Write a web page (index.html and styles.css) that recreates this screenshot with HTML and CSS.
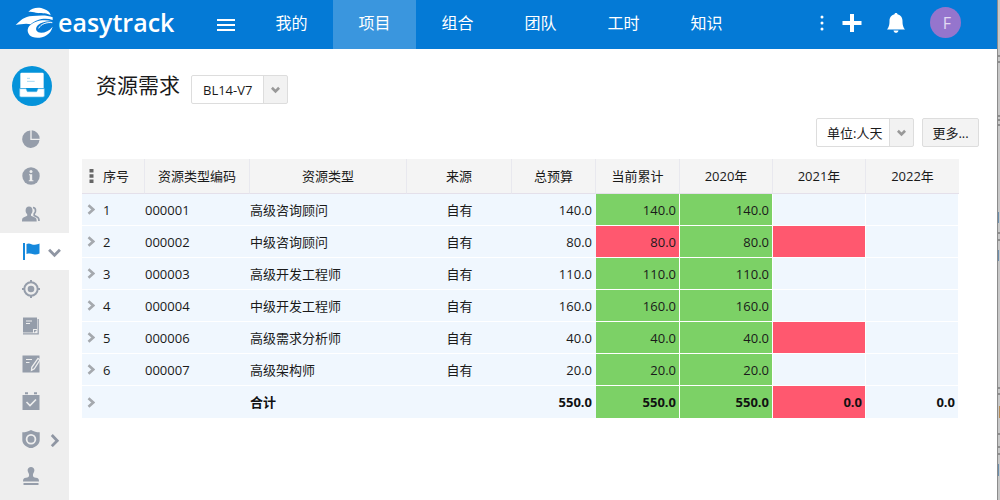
FILE: index.html
```
<!DOCTYPE html>
<html lang="zh-CN">
<head>
<meta charset="utf-8">
<title>资源需求</title>
<link rel="stylesheet" href="styles.css">
</head>
<body>
<svg class="defs" aria-hidden="true">
  <symbol id="chev-right" viewBox="0 0 8 10"><path d="M1.500 .8l4.700 4.200-4.700 4.200" fill="none" stroke="currentColor" stroke-width="2.600"/></symbol>
  <symbol id="chev-down" viewBox="0 0 10 8"><path d="M1 1.500l4 4 4-4" fill="none" stroke="currentColor" stroke-width="3"/></symbol>
</svg>
<div class="app">
  <header class="topbar">
    <a class="logo" href="#">
      <svg class="logo-mark" viewBox="45 18 120 99" aria-hidden="true">
        <path fill="#fff" d="M85 36C96 22 118 21 132 27C145 32 151 38 152 46C140 38 128 41 114 39C103 38 96 34 85 36Z"/>
        <path fill="#fff" d="M47 75C60 63 72 49 97 48C118 46 142 44 158 52L158 60C136 52 108 58 92 73C78 69 62 73 47 75Z"/>
        <path fill="#fff" d="M156 64C132 57 104 61 88 78C78 90 84 106 98 111C116 117 150 112 158 80C146 95 128 101 115 97C103 91 108 76 122 70C133 65 145 64 156 64Z"/>
        <path fill="none" stroke="#fff" stroke-width="3" d="M157 68C140 66 122 72 116 85"/>
      </svg>
      <span class="logo-text">easytrack</span>
    </a>
    <button class="icon-btn menu-btn" aria-label="菜单"><svg width="18" height="14" viewBox="0 0 18 14"><path d="M0 2h18M0 7h18M0 12h18" stroke="#fff" stroke-width="2"/></svg></button>
    <nav class="nav">
      <a href="#">我的</a><a href="#" class="active">项目</a><a href="#">组合</a><a href="#">团队</a><a href="#">工时</a><a href="#">知识</a>
    </nav>
    <div class="tools">
      <button class="icon-btn" aria-label="更多"><svg width="4" height="16" viewBox="0 0 4 16" fill="#fff"><circle cx="2" cy="2" r="1.500"/><circle cx="2" cy="8" r="1.500"/><circle cx="2" cy="14" r="1.500"/></svg></button>
      <button class="icon-btn plus" aria-label="新建"><svg width="20" height="20" viewBox="0 0 20 20"><path d="M10 1v18M.500 10h19" stroke="#fff" stroke-width="4"/></svg></button>
      <button class="icon-btn bell" aria-label="通知"><svg width="18" height="20" viewBox="0 0 18 20" fill="#fff"><path d="M9 0c.9 0 1.400.5 1.500 1.200C14 2 15.500 4.700 15.500 8c0 4.500.8 6.300 2.500 8.500H0c1.700-2.200 2.500-4 2.500-8.500C2.500 4.700 4 2 7.500 1.200 7.600.5 8.100 0 9 0zM6.500 17.500h5c-.3 1.500-1.300 2.300-2.500 2.300s-2.200-.8-2.500-2.300z"/></svg></button>
      <button class="avatar">F</button>
    </div>
  </header>
  <div class="body">
    <aside class="sidebar">
      <a class="project" href="#" aria-label="项目"><svg width="40" height="40" viewBox="0 0 120 120">
        <circle cx="60" cy="60" r="60" fill="#0593da"/>
        <path fill="#fff" d="M29 20h62a4 4 0 0 1 4 4v42H25V24a4 4 0 0 1 4-4z"/>
        <path fill="#fff" stroke="#5bb8e8" stroke-width="2" d="M23 68h19l4 9h28l4-9h19v21a4 4 0 0 1-4 4H27a4 4 0 0 1-4-4z"/>
        <path d="M45 37h9M45 46h23" stroke="#a8daf3" stroke-width="3"/></svg></a>
      <ul class="side-list">
        <li><a href="#" aria-label="概览"><svg viewBox="0 0 18 18"><path fill="currentColor" d="M8.300 .5V10h9.200A8.700 8.700 0 1 1 8.300 .5z"/><path fill="currentColor" d="M9.700.2A8.700 8.700 0 0 1 17.700 8.700h-8z"/></svg></a></li>
        <li><a href="#" aria-label="信息"><svg viewBox="0 0 18 18"><circle cx="9" cy="9" r="8.700" fill="currentColor"/><circle cx="9" cy="4.500" r="1.500" fill="#eee"/><path d="M7 7.200h3.200v6h1.200v1H6.800v-1h1v-5H7z" fill="#eee"/></svg></a></li>
        <li><a href="#" aria-label="人员"><svg viewBox="0 0 18 18"><path fill="currentColor" d="M7 1.500c2.200 0 3.500 1.600 3.500 4 0 1.600-.7 3-1.500 3.800v1.500l4 1.700c1.300.5 1.700 1.500 1.700 4H0c0-2.500.3-3.500 1.500-4l3.700-1.700V9.300C4.300 8.500 3.600 7.100 3.600 5.500 3.600 3.100 5 1.500 7 1.500z"/><path fill="none" stroke="currentColor" stroke-width="1.700" d="M11 2.600c2.600 0 3.600 3.500 1.200 6.300v1.500l3 1.500c1.300.6 1.800 1.700 1.800 4"/></svg></a></li>
        <li class="active"><a href="#" aria-label="资源"><svg viewBox="0 0 18 18" fill="currentColor"><path d="M1 1h2v17H1zM4.500 2c3-1.700 5 .7 8 .8 2 .1 3.500-.5 5-1.200v10c-2 1-4 1.300-6 .7-2.500-.8-4.500-1-7-.2z"/></svg></a>
          <svg class="more" viewBox="0 0 12 12"><path d="M1 3.500l5 5 5-5" fill="none" stroke="currentColor" stroke-width="2.600"/></svg></li>
        <li><a href="#" aria-label="目标"><svg viewBox="0 0 18 18"><circle cx="9" cy="9" r="6.700" fill="none" stroke="currentColor" stroke-width="2"/><circle cx="9" cy="9" r="3.300" fill="currentColor"/><path d="M9 0v3M9 15v3M0 9h3M15 9h3" stroke="currentColor" stroke-width="2"/></svg></a></li>
        <li><a href="#" aria-label="文档"><svg viewBox="0 0 18 18"><path fill="currentColor" d="M1 .5h14V12h-4v3.500H1z"/><path d="M16.200 2v14.800H1" fill="none" stroke="currentColor" stroke-width="1.200"/><path d="M4 4h6M4 6.500h4" stroke="#eee" stroke-width="1.200"/><path d="M12 13h3l-3 2.700z" fill="currentColor"/></svg></a></li>
        <li><a href="#" aria-label="编辑"><svg viewBox="0 0 18 18"><path fill="currentColor" d="M.5.500h17v17H.5z"/><path d="M4 4.500h6M4 7.500h3.500" stroke="#eee" stroke-width="1.200"/><path d="M16 3.500l2 1.300-5.700 9-2.800 1.500.3-3z" fill="#959daa" stroke="#eee" stroke-width="1.300"/></svg></a></li>
        <li><a href="#" aria-label="日程"><svg viewBox="0 0 18 18"><path fill="currentColor" d="M.5 3h17v15H.5zM3 .2h3v2H3zM12 .2h3v2h-3z"/><path d="M4.500 10l3.500 3.500 6-6" fill="none" stroke="#eee" stroke-width="1.600"/></svg></a></li>
        <li><a href="#" aria-label="安全"><svg viewBox="0 0 18 18"><path fill="currentColor" d="M9 0c3 1.700 5.500 2.300 8.700 2.300V10c0 4.200-3.700 6.800-8.700 8.600C4 16.800.3 14.200.3 10V2.300C3.500 2.300 6 1.700 9 0z"/><circle cx="9" cy="9.200" r="4.400" fill="none" stroke="#eee" stroke-width="1.800"/></svg></a>
          <svg class="more" viewBox="0 0 12 12"><path d="M3.500 1L8.500 6.200l-5 5" fill="none" stroke="currentColor" stroke-width="2.600"/></svg></li>
        <li><a href="#" aria-label="审批"><svg viewBox="0 0 18 18"><path fill="currentColor" d="M9 0c2 0 3.400 1.400 3.400 3.300 0 2-1.500 3-1.500 4.700 0 1.800 1 2.500 3.100 2.800 2.200.3 3 1.200 3 3.700H1c0-2.500.8-3.400 3-3.700C6.100 10.500 7.100 9.800 7.100 8c0-1.700-1.500-2.700-1.500-4.700C5.600 1.400 7 0 9 0zM1.500 16h15v2h-15z"/></svg></a></li>
      </ul>
    </aside>
    <main class="main">
      <div class="title-row">
        <h1>资源需求</h1>
        <span class="picker"><select class="version" aria-label="版本"><option>BL14-V7</option></select><svg class="caret"><use href="#chev-down"/></svg></span>
      </div>
      <div class="actions">
        <span class="picker"><select class="unit" aria-label="单位"><option>单位:人天</option></select><svg class="caret"><use href="#chev-down"/></svg></span>
        <button class="btn">更多...</button>
      </div>
      <table class="grid">
        <colgroup><col class="c-no"><col class="c-code"><col class="c-type"><col class="c-code"><col class="c-sum"><col class="c-sum"><col class="c-year"><col class="c-year"><col class="c-year"></colgroup>
        <thead><tr>
          <th><span class="lead"><svg class="grip" width="5" height="14" viewBox="0 0 5 14"><path d="M.5 0h4v3.500h-4zM.5 5.300h4v3.500h-4zM.5 10.500h4V14h-4z" fill="#666"/></svg>序号</span></th>
          <th>资源类型编码</th><th>资源类型</th><th>来源</th><th>总预算</th><th>当前累计</th><th>2020年</th><th>2021年</th><th>2022年</th>
        </tr></thead>
        <tbody>
          <tr><td><span class="lead"><button class="expand" aria-label="展开"><svg><use href="#chev-right"/></svg></button>1</span></td><td>000001</td><td>高级咨询顾问</td><td class="src">自有</td><td class="num">140.0</td><td class="num ok">140.0</td><td class="num ok">140.0</td><td></td><td></td></tr>
          <tr><td><span class="lead"><button class="expand" aria-label="展开"><svg><use href="#chev-right"/></svg></button>2</span></td><td>000002</td><td>中级咨询顾问</td><td class="src">自有</td><td class="num">80.0</td><td class="num over">80.0</td><td class="num ok">80.0</td><td class="over"></td><td></td></tr>
          <tr><td><span class="lead"><button class="expand" aria-label="展开"><svg><use href="#chev-right"/></svg></button>3</span></td><td>000003</td><td>高级开发工程师</td><td class="src">自有</td><td class="num">110.0</td><td class="num ok">110.0</td><td class="num ok">110.0</td><td></td><td></td></tr>
          <tr><td><span class="lead"><button class="expand" aria-label="展开"><svg><use href="#chev-right"/></svg></button>4</span></td><td>000004</td><td>中级开发工程师</td><td class="src">自有</td><td class="num">160.0</td><td class="num ok">160.0</td><td class="num ok">160.0</td><td></td><td></td></tr>
          <tr><td><span class="lead"><button class="expand" aria-label="展开"><svg><use href="#chev-right"/></svg></button>5</span></td><td>000006</td><td>高级需求分析师</td><td class="src">自有</td><td class="num">40.0</td><td class="num ok">40.0</td><td class="num ok">40.0</td><td class="over"></td><td></td></tr>
          <tr><td><span class="lead"><button class="expand" aria-label="展开"><svg><use href="#chev-right"/></svg></button>6</span></td><td>000007</td><td>高级架构师</td><td class="src">自有</td><td class="num">20.0</td><td class="num ok">20.0</td><td class="num ok">20.0</td><td></td><td></td></tr>
          <tr class="total"><td><span class="lead"><button class="expand" aria-label="展开"><svg><use href="#chev-right"/></svg></button></span></td><td></td><td>合计</td><td></td><td class="num">550.0</td><td class="num ok">550.0</td><td class="num ok">550.0</td><td class="num over">0.0</td><td class="num">0.0</td></tr>
        </tbody>
      </table>
    </main>
  </div>
</div>
<div class="edge"><svg width="2" height="500" viewBox="0 0 2 500"><path d="M0 56h2M0 62h2M0 116h2M0 120h2M0 125h2M0 233h2M0 240h2M0 388h2M0 394h2M0 434h2M0 447h2M0 454h2" stroke="#555"/><path d="M.5 212v11M.5 250v11M.5 464v12" stroke="#6d8fae"/><path d="M1.500 406v12" stroke="#b58a55"/></svg></div>
</body>
</html>
```
FILE: styles.css
```
* { box-sizing: border-box; }
body {
  margin: 0;
  display: flex;
  min-height: 100vh;
  background: #fff;
  color: #1a1a1a;
  font: 13px/20px "Open Sans", "Noto Sans CJK SC", sans-serif;
}
button, select { font: inherit; color: inherit; }
a { color: inherit; text-decoration: none; }
.defs { position: absolute; width: 0; height: 0; }
.app { flex: 1; min-width: 0; display: flex; flex-direction: column; }
.edge { width: 3px; background: #c8c8c8; border-left: 1px solid #8c8c8c; overflow: hidden; }
.edge svg { display: block; }

.topbar {
  display: flex;
  align-items: stretch;
  height: 49px;
  background: #047ad6;
  color: #fff;
}
.logo { display: flex; align-items: center; gap: 3px; width: 217px; padding: 0 0 4px 15px; }
.logo-mark { width: 40px; height: 33px; }
.logo-text { padding-bottom: 2px; font-size: 25px; line-height: 32px; font-weight: 600; }
.icon-btn { display: flex; align-items: center; justify-content: center; padding: 0; border: 0; background: none; }
.menu-btn { width: 18px; margin-right: 15px; }
.nav { display: flex; }
.nav a { width: 83px; padding-top: 11px; text-align: center; font-size: 16px; line-height: 24px; }
.nav .active { background: #3a96de; }
.tools { display: flex; align-items: center; margin-left: auto; padding: 0 36px 4px 0; }
.plus { margin-left: 18px; }
.bell { margin-left: 25px; }
.avatar {
  width: 31px;
  height: 31px;
  margin-left: 25px;
  padding: 0 0 0 3px;
  border: 0;
  border-radius: 50%;
  background: #9575cd;
  color: #e3daf3;
  font-size: 16px;
}

.body { display: flex; flex: 1; }
.sidebar { width: 69px; background: #eee; color: #959daa; }
.project { display: block; padding: 17px 0 0 12px; height: 71px; }
.side-list { display: flex; flex-direction: column; min-height: 375px; margin: 0; padding: 0; list-style: none; }
.side-list li { flex: 1; display: flex; align-items: center; gap: 8px; padding-left: 22px; }
.side-list a, .side-list svg { display: block; width: 18px; height: 18px; }
.side-list .more { width: 13px; height: 13px; margin-top: 3px; color: #8f96a3; }
.side-list .active { background: #fff; }
.side-list .active a { color: #1588dc; }

.main { flex: 1; min-width: 0; padding: 22px 18px 0 13px; }
.title-row { display: flex; align-items: flex-start; gap: 11px; padding-left: 14px; height: 47px; }
h1 { margin: 0; font-size: 21px; line-height: 28px; font-weight: 400; }
.title-row .picker { margin-top: 4px; }
.actions { display: flex; justify-content: flex-end; gap: 8px; }
.picker { position: relative; display: block; }
.picker select {
  appearance: none;
  display: block;
  height: 29px;
  padding: 0 26px 0 11px;
  border: 1px solid #ddd;
  border-radius: 2px;
  background: linear-gradient(to left, #f2f2f2 23px, #ddd 23px, #ddd 24px, #fff 24px);
}
.version { width: 97px; }
.picker .unit { width: 98px; padding-left: 10px; }
.caret { position: absolute; right: 8px; top: 11px; width: 9px; height: 8px; color: #999; pointer-events: none; }
.btn { width: 57px; height: 29px; padding: 0; border: 1px solid #ddd; border-radius: 2px; background: #f3f3f3; }

.grid { width: calc(100% - 22px); margin-top: 12px; table-layout: fixed; border-collapse: separate; border-spacing: 0; }
.c-no { width: 63px; }
.c-code { width: 105px; }
.c-type { width: 157px; }
.c-sum { width: 84px; }
.c-year { width: 93px; }
.grid th {
  height: 35px;
  padding: 0;
  background: #f4f4f4;
  border-right: 1px solid #e8e8ee;
  border-bottom: 1px solid #e4e0ea;
  font-weight: 400;
}
.grid th:last-child { border-right: 0; }
.grid td { height: 32px; padding: 0; background: #f0f7fe; border-bottom: 1px solid #fff; white-space: nowrap; }
.grid td:nth-child(n+6) { border-right: 1px solid #fff; }
.grid .num { text-align: right; padding-right: 4px; }
.grid td.num:nth-child(n+6) { padding-right: 3px; }
.grid .src { text-align: center; }
.grid .ok { background: #7cd166; }
.grid .over { background: #ff586f; }
.grid .total td { height: 33px; }
.total { font-weight: 700; color: #111; }
.lead { display: flex; align-items: center; gap: 8px; padding-left: 5px; }
.lead .grip { margin: 0 1px 0 2px; }
.expand { display: flex; padding: 0; border: 0; background: none; color: #a5a9ae; }
.expand svg { width: 8px; height: 11px; }
```
